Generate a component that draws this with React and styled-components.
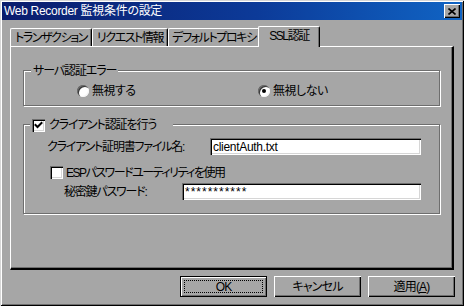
import React from 'react';
import styled, { createGlobalStyle } from 'styled-components';

const FACE = '#a6a6a6';
const SHADOW = '#6e6e6e';
const LIGHT = '#d6d6d6';

const GlobalStyle = createGlobalStyle`
	html, body {
		margin: 0;
		padding: 0;
		background: ${FACE};
	}
	* {
		box-sizing: border-box;
	}
	body {
		font-family: "Liberation Sans", "Noto Sans CJK JP", sans-serif;
		font-size: 12px;
		font-feature-settings: "palt" 1;
		font-variant-east-asian: proportional-width;
		color: #000;
	}
`;

const Window = styled.div`
	width: 464px;
	height: 306px;
	padding: 2px;
	background: ${FACE};
	box-shadow: inset 1px 1px 0 ${LIGHT}, inset -1px -1px 0 #000,
		inset 2px 2px 0 #fff, inset -2px -2px 0 ${SHADOW};
	display: flex;
	flex-direction: column;
`;

const TitleBar = styled.div`
	height: 18px;
	display: flex;
	align-items: center;
	justify-content: space-between;
	padding: 0 2px 0 2px;
	background: linear-gradient(90deg, #0a1c6c 0%, #0c3a98 55%, #1064c4 100%);
	color: #fff;
`;

const Title = styled.span`
	font-size: 12px;
	line-height: 18px;
	letter-spacing: -0.3px;
`;

const CloseButton = styled.div`
	width: 16px;
	height: 14px;
	background: ${FACE};
	box-shadow: inset 1px 1px 0 #fff, inset -1px -1px 0 #000,
		inset -2px -2px 0 ${SHADOW};
	display: flex;
	align-items: center;
	justify-content: center;
`;

const Body = styled.div`
	flex: 1;
	padding: 6px 8px 0 8px;
	display: flex;
	flex-direction: column;
`;

const TabStrip = styled.div`
	height: 20px;
	display: flex;
	align-items: flex-end;
	position: relative;
	z-index: 1;
`;

const Tab = styled.div`
	width: ${p => p.$w}px;
	height: ${p => (p.$active ? 21 : 18)}px;
	margin: ${p => (p.$active ? '0 0 -1px -2px' : '0')};
	background: ${FACE};
	border-top: 1px solid #fff;
	border-left: 1px solid #fff;
	border-right: 1px solid #000;
	border-radius: 2px 2px 0 0;
	box-shadow: inset -1px 0 0 ${SHADOW};
	display: flex;
	align-items: ${p => (p.$active ? 'flex-start' : 'center')};
	padding-top: ${p => (p.$active ? '2px' : '0')};
	justify-content: center;
	font-size: 12px;
	letter-spacing: -1.4px;
	line-height: 14px;
	white-space: nowrap;
`;

const Panel = styled.div`
	height: 224px;
	background: ${FACE};
	border-top: 1px solid #fff;
	border-left: 1px solid #fff;
	border-right: 2px solid #000;
	border-bottom: 2px solid #000;
	box-shadow: inset -1px -1px 0 ${SHADOW};
	padding: 23px 12px 0 12px;
	display: flex;
	flex-direction: column;
	gap: 18px;
`;

const Group = styled.div`
	position: relative;
	height: ${p => p.$h}px;
	border: 1px solid ${SHADOW};
	box-shadow: inset 1px 1px 0 #fff, 1px 1px 0 #fff;
	padding: ${p => p.$pad};
`;

const Caption = styled.div`
	position: absolute;
	top: -7px;
	left: ${p => p.$left}px;
	width: ${p => (p.$w ? `${p.$w}px` : 'auto')};
	height: 14px;
	padding: 0 2px;
	background: ${FACE};
	display: flex;
	align-items: center;
	gap: 4px;
	line-height: 14px;
	letter-spacing: -1.1px;
	white-space: nowrap;
`;

const RadioRow = styled.div`
	display: flex;
	align-items: center;
	height: 14px;
`;

const RadioItem = styled.label`
	width: ${p => (p.$w ? `${p.$w}px` : 'auto')};
	display: flex;
	align-items: center;
	gap: 3px;
	line-height: 14px;
	letter-spacing: -0.5px;
`;

const RadioCircle = styled.span`
	width: 12px;
	height: 12px;
	border-radius: 50%;
	background: #fff;
	box-shadow: inset 1px 1px 0 ${SHADOW}, inset 2px 2px 0 #3a3a3a,
		inset -1px -1px 0 #f4f4f4;
	display: flex;
	align-items: center;
	justify-content: center;
	flex-shrink: 0;

	&::after {
		content: '';
		width: 4px;
		height: 4px;
		border-radius: 50%;
		background: ${p => (p.$on ? '#000' : 'transparent')};
	}
`;

const CheckBoxBox = styled.span`
	width: 13px;
	height: 13px;
	background: #fff;
	box-shadow: inset 1px 1px 0 ${SHADOW}, inset 2px 2px 0 #000,
		inset -1px -1px 0 #fff, inset -2px -2px 0 ${LIGHT};
	display: flex;
	align-items: center;
	justify-content: center;
	flex-shrink: 0;
`;

const Row = styled.div`
	display: flex;
	align-items: center;
	height: 17px;
	margin: ${p => p.$m || '0'};
	gap: ${p => p.$gap || 0}px;
`;

const Label = styled.span`
	width: ${p => (p.$w ? `${p.$w}px` : 'auto')};
	flex-shrink: 0;
	line-height: 14px;
	letter-spacing: ${p => p.$ls ?? -1.2}px;
	white-space: nowrap;
`;

const TextBox = styled.div`
	flex: 1;
	height: 17px;
	background: #fff;
	box-shadow: inset 1px 1px 0 ${SHADOW}, inset 2px 2px 0 #000,
		inset -1px -1px 0 #fff, inset -2px -2px 0 ${LIGHT};
	padding: 2px 3px 0 3px;
	font-family: "Liberation Sans", sans-serif;
	font-size: 12px;
	line-height: 14px;
	letter-spacing: ${p => p.$spacing || -0.3}px;
	white-space: nowrap;
	overflow: hidden;
`;

const ButtonRow = styled.div`
	margin-top: 6px;
	margin-right: -1px;
	display: flex;
	justify-content: flex-end;
	gap: 7px;
`;

const Button = styled.div`
	position: relative;
	width: 87px;
	height: 21px;
	background: ${FACE};
	box-shadow: ${p =>
		p.$default
			? `inset 0 0 0 1px #000, inset 2px 2px 0 #fff, inset -2px -2px 0 ${SHADOW}`
			: `inset 1px 1px 0 #fff, inset -1px -1px 0 #000, inset -2px -2px 0 ${SHADOW}`};
	display: flex;
	align-items: center;
	justify-content: center;
	line-height: 14px;
	letter-spacing: -0.8px;

	&::after {
		content: '';
		display: ${p => (p.$default ? 'block' : 'none')};
		position: absolute;
		inset: 4px;
		border: 1px dotted #000;
	}
`;

function Radio({ on, width, children }) {
	return (
		<RadioItem $w={width}>
			<RadioCircle $on={on} />
			<span>{children}</span>
		</RadioItem>
	);
}

function CheckBox({ checked }) {
	return (
		<CheckBoxBox>
			{checked && (
				<svg width="9" height="9" viewBox="0 0 9 9">
					<polyline points="1.5,4 3.5,6 7.5,2" fill="none" stroke="#000" strokeWidth="2" strokeLinecap="square" />
				</svg>
			)}
		</CheckBoxBox>
	);
}

export default function App() {
	return (
		<>
			<GlobalStyle />
			<Window>
				<TitleBar>
					<Title>Web Recorder 監視条件の設定</Title>
					<CloseButton>
						<svg width="8" height="7" viewBox="0 0 8 7">
							<path d="M0.5 0.5 L7.5 6.5 M7.5 0.5 L0.5 6.5" stroke="#000" strokeWidth="1.6" />
						</svg>
					</CloseButton>
				</TitleBar>
				<Body>
					<TabStrip>
						<Tab $w={82}>トランザクション</Tab>
						<Tab $w={76}>リクエスト情報</Tab>
						<Tab $w={92}>デフォルトプロキシ</Tab>
						<Tab $w={62} $active>SSL認証</Tab>
					</TabStrip>
					<Panel>
						<Group $h={36} $pad="13px 0 0 53px">
							<Caption $left={7}>サーバ認証エラー</Caption>
							<RadioRow>
								<Radio width={181}>無視する</Radio>
								<Radio on>無視しない</Radio>
							</RadioRow>
						</Group>
						<Group $h={90} $pad="13px 18px 0 23px">
							<Caption $left={6} $w={143}>
								<CheckBox checked />
								<span>クライアント認証を行う</span>
							</Caption>
							<Row>
								<Label $w={163}>クライアント証明書ファイル名:</Label>
								<TextBox>clientAuth.txt</TextBox>
							</Row>
							<Row $m="9px 0 0 3px" $gap={3}>
								<CheckBox />
								<Label $ls={-1.5}>ESPパスワードユーティリティを使用</Label>
							</Row>
							<Row $m="2px 0 0 17px">
								<Label $w={118}>秘密鍵パスワード:</Label>
								<TextBox $spacing={1}>***********</TextBox>
							</Row>
						</Group>
					</Panel>
					<ButtonRow>
						<Button $default>OK</Button>
						<Button>キャンセル</Button>
						<Button>適用(<u>A</u>)</Button>
					</ButtonRow>
				</Body>
			</Window>
		</>
	);
}
